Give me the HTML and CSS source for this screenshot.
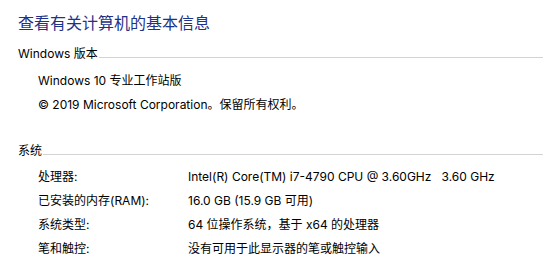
FILE: index.html
```html
<!DOCTYPE html>
<html lang="zh-CN">
<head>
<meta charset="utf-8">
<title>系统</title>
<link rel="stylesheet" href="styles.css">
</head>
<body>
<h1 class="title">查看有关计算机的基本信息</h1>

<section class="section">
  <div class="section-head"><span class="section-name">Windows 版本</span><div class="rule"></div></div>
  <div class="lines">
    <div class="line">Windows 10 专业工作站版</div>
    <div class="line">© 2019 Microsoft Corporation。保留所有权利。</div>
  </div>
</section>

<section class="section section-system">
  <div class="section-head"><span class="section-name">系统</span><div class="rule"></div></div>
  <div class="grid">
    <div class="label">处理器:</div><div class="value pre">Intel(R) Core(TM) i7-4790 CPU @ 3.60GHz   3.60 GHz</div>
    <div class="label">已安装的内存(RAM):</div><div class="value">16.0 GB (15.9 GB 可用)</div>
    <div class="label">系统类型:</div><div class="value">64 位操作系统，基于 x64 的处理器</div>
    <div class="label">笔和触控:</div><div class="value">没有可用于此显示器的笔或触控输入</div>
  </div>
</section>
</body>
</html>
```

FILE: styles.css
```css
html, body {
  margin: 0;
  background: #ffffff;
}
body {
  padding-top: 10px;
  font-family: "Inter", "Noto Sans CJK SC", sans-serif;
  font-size: 12px;
  line-height: 24px;
  color: #000000;
}
.title {
  margin: 0 0 8px 18px;
  font-family: "Noto Sans CJK SC", sans-serif;
  font-size: 16px;
  font-weight: normal;
  line-height: 24px;
  color: #1e3287;
}
.section-head {
  display: flex;
  margin-left: 18px;
  height: 24px;
}
.section-name {
  white-space: nowrap;
}
.rule {
  flex: 1;
  height: 0;
  margin-top: 15px;
  margin-left: 1px;
  border-top: 1px solid #d3d3d3;
}
.lines {
  margin-top: 3px;
  padding-left: 38px;
}
.section-system {
  margin-top: 22px;
}
.grid {
  margin-top: 2px;
  padding-left: 38px;
  display: grid;
  grid-template-columns: 150px auto;
}
.pre {
  white-space: pre;
}
```
